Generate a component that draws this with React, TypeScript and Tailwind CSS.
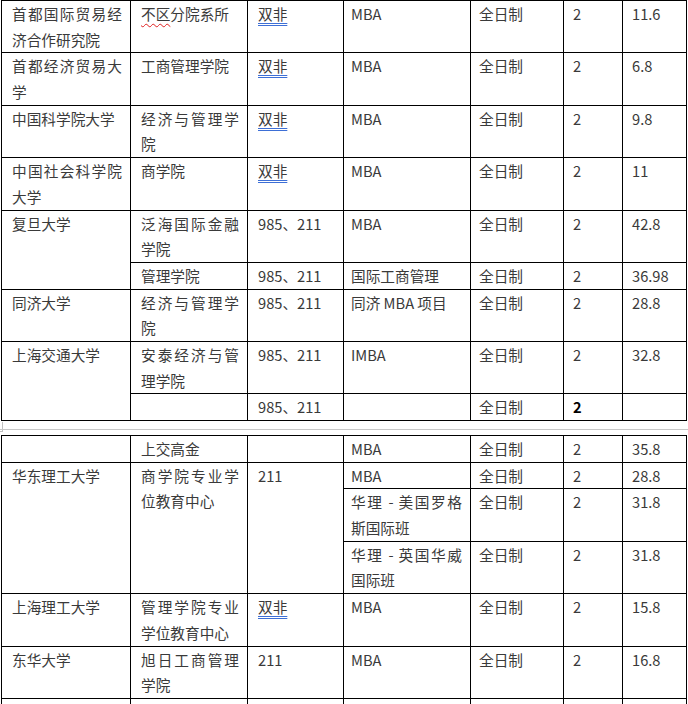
import React from "react";

type CellData = {
  lines: React.ReactNode[];
  rowSpan?: number;
  bold?: boolean;
};

const widths = [129, 117, 96, 127, 93, 59, 64];
// left padding per column, as measured in the document
const padLeft = ["pl-[10px]", "pl-[10px]", "pl-[10px]", "pl-[7px]", "pl-[8px]", "pl-[9px]", "pl-[9px]"];

const Shuangfei = () => (
  <span className="underline decoration-double decoration-[#3d6fd6] underline-offset-[3px] decoration-[1px]">
    双非
  </span>
);

const c = (lines: React.ReactNode | React.ReactNode[], rowSpan?: number): CellData => ({
  lines: Array.isArray(lines) ? lines : [lines],
  rowSpan,
});

const table1: CellData[][] = [
  [
    c(["首都国际贸易经", "济合作研究院"]),
    c(
      <>
        <span className="underline decoration-wavy decoration-[#e02020] decoration-[1px] underline-offset-[3px]">
          不区
        </span>
        分院系所
      </>
    ),
    c(<Shuangfei />),
    c("MBA"),
    c("全日制"),
    c("2"),
    c("11.6"),
  ],
  [c(["首都经济贸易大", "学"]), c("工商管理学院"), c(<Shuangfei />), c("MBA"), c("全日制"), c("2"), c("6.8")],
  [c("中国科学院大学"), c(["经济与管理学", "院"]), c(<Shuangfei />), c("MBA"), c("全日制"), c("2"), c("9.8")],
  [c(["中国社会科学院", "大学"]), c("商学院"), c(<Shuangfei />), c("MBA"), c("全日制"), c("2"), c("11")],
  [c("复旦大学", 2), c(["泛海国际金融", "学院"]), c("985、211"), c("MBA"), c("全日制"), c("2"), c("42.8")],
  [c("管理学院"), c("985、211"), c("国际工商管理"), c("全日制"), c("2"), c("36.98")],
  [c("同济大学"), c(["经济与管理学", "院"]), c("985、211"), c("同济 MBA 项目"), c("全日制"), c("2"), c("28.8")],
  [c("上海交通大学", 2), c(["安泰经济与管", "理学院"]), c("985、211"), c("IMBA"), c("全日制"), c("2"), c("32.8")],
  [c(""), c("985、211"), c(""), c("全日制"), { lines: ["2"], bold: true }, c("")],
];

const table2: CellData[][] = [
  [c(""), c("上交高金"), c(""), c("MBA"), c("全日制"), c("2"), c("35.8")],
  [
    c("华东理工大学", 3),
    c(["商学院专业学", "位教育中心"], 3),
    c("211", 3),
    c("MBA"),
    c("全日制"),
    c("2"),
    c("28.8"),
  ],
  [c(["华理 - 美国罗格", "斯国际班"]), c("全日制"), c("2"), c("31.8")],
  [c(["华理 - 英国华威", "国际班"]), c("全日制"), c("2"), c("31.8")],
  [c("上海理工大学"), c(["管理学院专业", "学位教育中心"]), c(<Shuangfei />), c("MBA"), c("全日制"), c("2"), c("15.8")],
  [c("东华大学"), c(["旭日工商管理", "学院"]), c("211"), c("MBA"), c("全日制"), c("2"), c("16.8")],
  [c(""), c(""), c(""), c(""), c(""), c(""), c("")],
];

function Cell({ cell, pad }: { cell: CellData; pad: string }) {
  const last = cell.lines.length - 1;
  return (
    <td
      rowSpan={cell.rowSpan}
      className={`border border-black align-top ${pad} pr-[8px] py-0 leading-[25.7px] ${
        cell.bold ? "font-bold text-black" : ""
      }`}
    >
      {cell.lines.map((line, i) => (
        <div key={i} className={`h-[25.7px] ${i < last ? "text-justify [text-align-last:justify]" : ""}`}>
          {line}
        </div>
      ))}
    </td>
  );
}

function DocTable({ rows }: { rows: CellData[][] }) {
  return (
    <table className="ml-px w-[685px] table-fixed border-collapse">
      <colgroup>
        {widths.map((w, i) => (
          <col key={i} style={{ width: w }} />
        ))}
      </colgroup>
      <tbody>
        {rows.map((row, r) => {
          // rows with fewer cells start after the row-spanned columns
          const offset = widths.length - row.length;
          return (
            <tr key={r}>
              {row.map((cell, i) => (
                <Cell key={i} cell={cell} pad={padLeft[i + offset]} />
              ))}
            </tr>
          );
        })}
      </tbody>
    </table>
  );
}

export default function App() {
  return (
    <div
      className="w-[688px] h-[704px] overflow-hidden bg-white text-[#3a3a3a] text-[14.67px]"
      style={{ fontFamily: '"Noto Sans CJK SC", "Noto Sans", sans-serif' }}
    >
      <DocTable rows={table1} />
      {/* gap between the two table parts */}
      <div className="flex h-[14px] flex-col">
        <div className="flex h-[8px]">
          <div className="mt-[1px] h-[10px] w-[3px] border-r border-b border-[#c0c0c0]" />
        </div>
        <div className="border-t border-[#c8c8c8]" />
      </div>
      <DocTable rows={table2} />
    </div>
  );
}
